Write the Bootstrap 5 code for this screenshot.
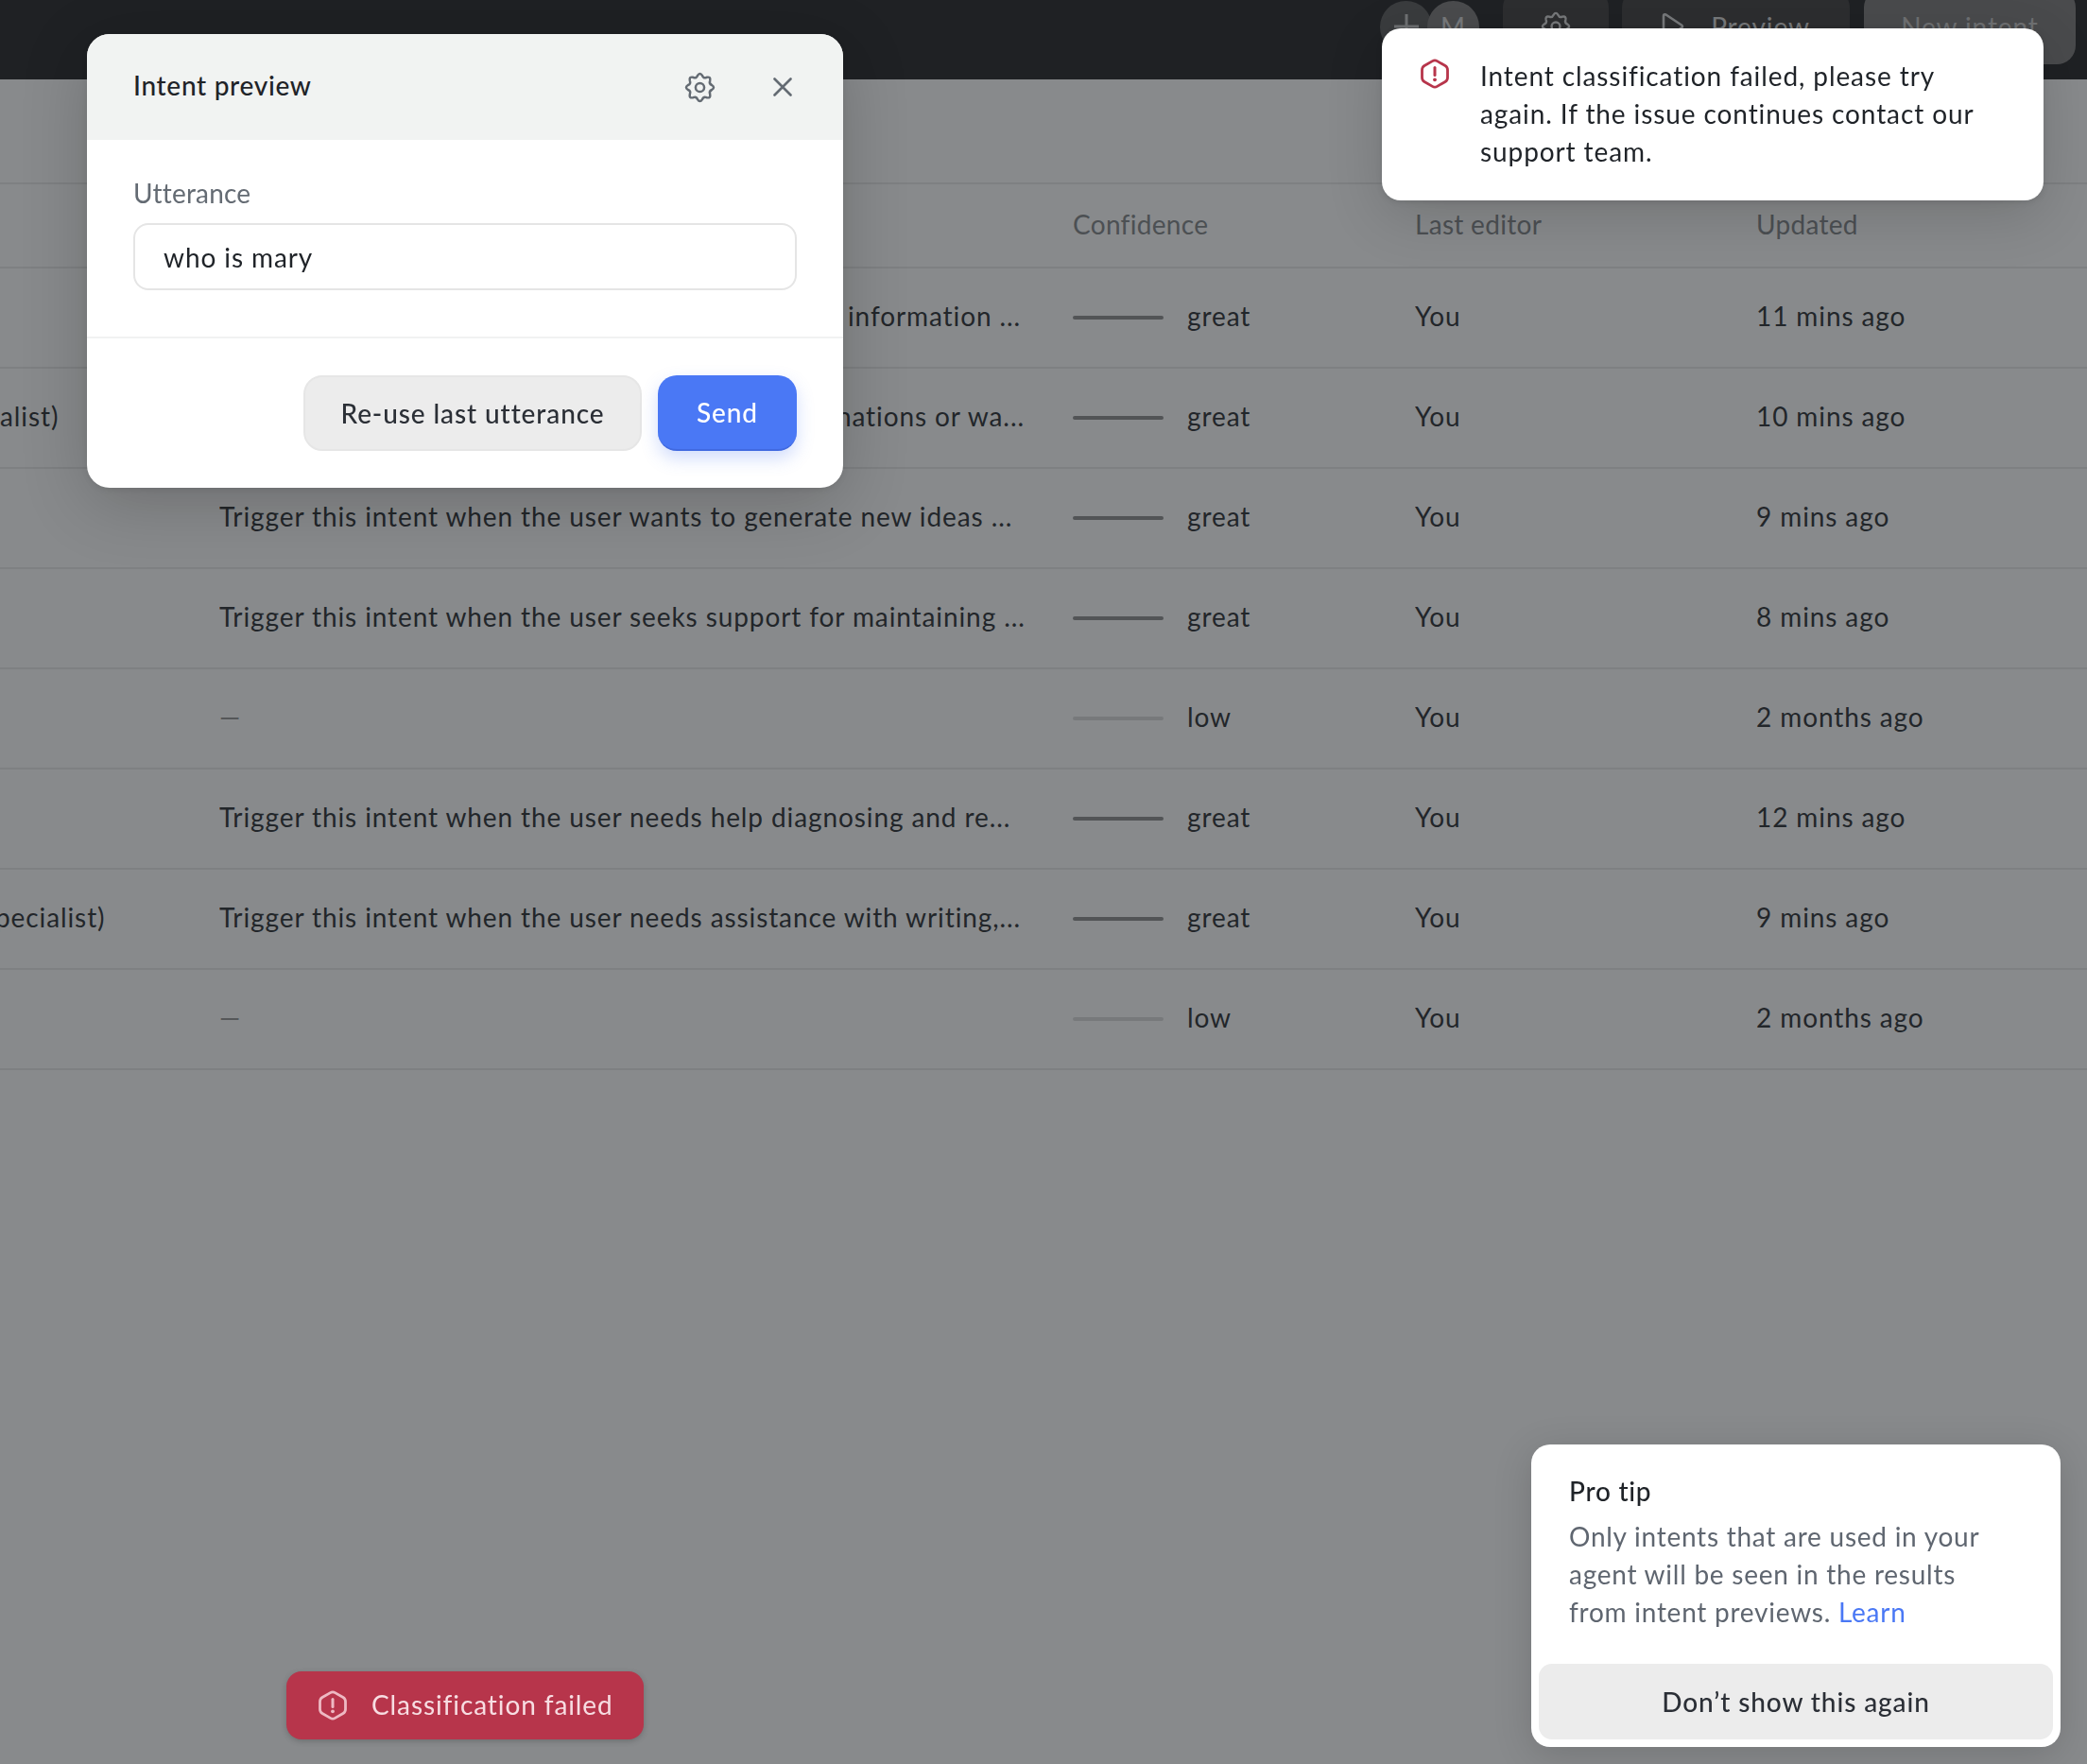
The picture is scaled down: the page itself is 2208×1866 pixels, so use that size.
<!DOCTYPE html>
<html lang="en">
<head>
  <meta charset="UTF-8" />
  <meta name="viewport" content="width=device-width, initial-scale=1.0"/>
  <title>Intents</title>
  <link href="https://cdn.jsdelivr.net/npm/bootstrap@5.3.0/dist/css/bootstrap.min.css" rel="stylesheet"/>
  <style>
    html, body { height: 100%; overflow: hidden; }
    body { font-family: Lato, "Noto Sans", sans-serif; font-size: 28px; line-height: 40px; color: #33363a; background: #fff; letter-spacing: .9px; }
    svg { display: block; flex-shrink: 0; }

    .topbar { height: 84px; background: #2d2d2f; padding: 0 12px 16px 0; align-items: flex-end; gap: 14px; }
    .bar-btn { height: 80px; flex-shrink: 0; border-radius: 20px; background: #494747; color: #ddd; gap: 28px; justify-content: center; align-items: center; }
    .bar-gear { width: 112px; }
    .bar-preview { width: 241px; }
    .bar-new { width: 224px; background: #838181; color: #cdcccc; margin-left: 1px; }
    .avatars { width: 105px; height: 80px; margin-right: 11px; flex-shrink: 0; }
    .avatar { width: 55px; height: 55px; border-radius: 50%; align-items: center; justify-content: center; margin-bottom: 0; }
    .avatar-plus { background: #636363; color: #ccc; }
    .avatar-m { background: #848282; color: #ddd; margin-left: -5px; }
    .subbar { height: 111px; border-bottom: 2px solid #ebebeb; }

    .intent-table { width: 2208px; table-layout: fixed; margin: 0; color: #33363a; }
    .intent-table th, .intent-table td { padding: 0 0 5px; vertical-align: middle; border-bottom: 2px solid #ebebeb; white-space: nowrap; overflow: hidden; background: transparent; color: inherit; }
    .intent-table th { height: 88px; font-weight: 400; color: #878a8d; letter-spacing: .3px; padding-bottom: 3px; }
    .intent-table td { height: 106px; }
    .cut-name { display: block; margin-left: -5px; }
    .dash { color: #999; }
    .conf { align-items: center; gap: 25px; }
    .conf-bar { width: 96px; height: 4px; border-radius: 2px; background: #939393; margin-top: 5px; }
    .conf-bar.is-low { background: #ddd; }

    .backdrop { position: fixed; inset: 0; background: rgba(17, 21, 25, .5); }

    .preview-dialog { position: fixed; left: 92px; top: 36px; width: 800px; height: 480px; background: #fff; border: 0; border-radius: 24px; overflow: hidden; box-shadow: 0 16px 70px rgba(0, 0, 0, .2), 0 2px 6px rgba(0, 0, 0, .08); }
    .preview-dialog .modal-header { height: 112px; background: #f1f3f2; border: 0; border-radius: 0; padding: 0 54px 0 49px; align-items: center; gap: 61px; }
    .dialog-title { font-size: 28px; line-height: 40px; font-weight: 500; color: #1f2328; margin: 0 auto 5px 0; letter-spacing: .7px; }
    .preview-dialog .modal-body { flex: none; height: 208px; padding: 36px 49px 0; }
    .preview-dialog .form-label { color: #646b73; margin: 0 0 12px; line-height: 40px; display: block; letter-spacing: .2px; }
    .preview-dialog .form-control { height: 71px; border: 2px solid #e5e5e5; border-radius: 16px; font-size: 28px; padding: 0 30px; color: #1f2328; letter-spacing: .9px; }
    .preview-dialog .modal-footer { border-top: 2px solid #f1f2f2; border-radius: 0; padding: 39px 49px 0; gap: 17px; justify-content: flex-end; align-items: flex-start; }
    .preview-dialog .modal-footer > * { margin: 0; }
    .act-btn { height: 80px; border-radius: 20px; font-size: 28px; font-weight: 500; letter-spacing: .9px; padding: 0 0 1px; }
    .act-reuse { width: 358px; background: #ececec; border: 2px solid #e6e6e6; color: #2b2f36; }
    .act-send { width: 147px; background: #4a78f5; border: 0; border-bottom: 2px solid #4069e0; color: #fff; box-shadow: 0 8px 18px rgba(74, 120, 245, .25); }

    .fail-notice { position: fixed; left: 1462px; top: 30px; width: 700px; height: 182px; background: #fff; border-radius: 20px; padding: 30px 60px 0 40px; gap: 32px; color: #1f2328; box-shadow: 0 16px 60px rgba(0, 0, 0, .16), 0 2px 6px rgba(0, 0, 0, .1); }
    .fail-notice svg { margin: 2px 0 0 0; }
    .fail-notice p { margin: 0; }

    .fail-pill { position: fixed; left: 303px; top: 1768px; width: 378px; height: 72px; background: #b7354b; border-radius: 16px; color: #f7dde2; padding: 0 0 2px 33px; gap: 25px; align-items: center; box-shadow: 0 2px 6px rgba(0, 0, 0, .2); }
    .fail-pill svg { margin-top: 2px; }

    .tip-card { position: fixed; left: 1620px; top: 1528px; width: 560px; height: 320px; background: #fff; border: 0; border-radius: 20px; padding: 29px 8px 8px; box-shadow: 0 8px 40px rgba(0, 0, 0, .15); }
    .tip-text { padding: 0 50px 0 32px; color: #5f6670; letter-spacing: .75px; }
    .tip-title { color: #1f2328; font-weight: 500; margin: 0 0 8px; }
    .tip-text a { color: #4a78f5; text-decoration: none; }
    .tip-btn { width: 544px; height: 80px; margin-top: auto; border: 0; border-radius: 14px; background: #ececec; color: #2b2f36; font-size: 28px; font-weight: 500; letter-spacing: .9px; padding: 0 0 1px; }
  </style>
</head>
<body>
  <svg width="0" height="0" class="position-absolute">
    <symbol id="cog" viewBox="-2 -2 36 36">
      <path fill="none" stroke="currentColor" stroke-width="2.7" d="M13.27 2.27Q16 -2 18.73 2.27Q20.21 5.84 23.78 4.36Q28.73 3.27 27.64 8.22Q26.16 11.79 29.73 13.27Q34 16 29.73 18.73Q26.16 20.21 27.64 23.78Q28.73 28.73 23.78 27.64Q20.21 26.16 18.73 29.73Q16 34 13.27 29.73Q11.79 26.16 8.22 27.64Q3.27 28.73 4.36 23.78Q5.84 20.21 2.27 18.73Q-2 16 2.27 13.27Q5.84 11.79 4.36 8.22Q3.27 3.27 8.22 4.36Q11.79 5.84 13.27 2.27Z"/>
      <circle cx="16" cy="16" r="5" fill="none" stroke="currentColor" stroke-width="2.7"/>
    </symbol>
    <symbol id="alert" viewBox="0 0 32 32">
      <path fill="none" stroke="currentColor" stroke-width="2.8" d="M13.5 2.6Q16 1.2 18.5 2.6L27 7.5Q29.5 9 29.5 12L29.5 20Q29.5 23 27 24.5L18.5 29.4Q16 30.8 13.5 29.4L5 24.5Q2.5 23 2.5 20L2.5 12Q2.5 9 5 7.5Z"/>
      <path fill="none" stroke="currentColor" stroke-width="3" stroke-linecap="round" d="M16 9.5V17.5"/>
      <circle cx="16" cy="22.3" r="1.9" fill="currentColor"/>
    </symbol>
  </svg>

  <header class="topbar d-flex justify-content-end">
    <div class="avatars d-flex align-items-center">
      <div class="avatar avatar-plus d-flex">
        <svg width="30" height="30" viewBox="0 0 30 30"><path fill="none" stroke="currentColor" stroke-width="3" d="M15 2V28M2 15H28"/></svg>
      </div>
      <div class="avatar avatar-m d-flex">M</div>
    </div>
    <div class="bar-btn bar-gear d-flex">
      <svg width="32" height="32"><use href="#cog"/></svg>
    </div>
    <div class="bar-btn bar-preview d-flex">
      <svg width="24" height="30" viewBox="0 0 24 30"><path fill="none" stroke="currentColor" stroke-width="2.6" stroke-linejoin="round" d="M2 4Q2 1.500 4.500 2.500L21 13.500Q23 15 21 16.500L4.500 27.500Q2 28.500 2 26Z"/></svg>
      <span>Preview</span>
    </div>
    <div class="bar-btn bar-new d-flex">New intent</div>
  </header>
  <div class="subbar"></div>

  <table class="table intent-table">
    <colgroup>
      <col style="width: 232px"/>
      <col style="width: 903px"/>
      <col style="width: 362px"/>
      <col style="width: 361px"/>
      <col/>
    </colgroup>
    <thead>
      <tr><th></th><th></th><th>Confidence</th><th>Last editor</th><th>Updated</th></tr>
    </thead>
    <tbody id="rows"></tbody>
  </table>

  <div class="backdrop"></div>

  <div class="modal-content preview-dialog">
    <div class="modal-header">
      <h5 class="dialog-title">Intent preview</h5>
      <svg width="33" height="33" style="color: #646b73"><use href="#cog"/></svg>
      <svg width="20" height="20" viewBox="0 0 20 20"><path fill="none" stroke="#646b73" stroke-width="2.600" stroke-linecap="round" d="M1.500 1.500L18.500 18.500M18.500 1.500L1.500 18.500"/></svg>
    </div>
    <div class="modal-body">
      <label class="form-label" for="utterance">Utterance</label>
      <input id="utterance" class="form-control" type="text" value="who is mary"/>
    </div>
    <div class="modal-footer">
      <button type="button" class="btn act-btn act-reuse">Re-use last utterance</button>
      <button type="button" class="btn act-btn act-send">Send</button>
    </div>
  </div>

  <div class="fail-notice d-flex">
    <svg width="32" height="32" style="color: #b7354b"><use href="#alert"/></svg>
    <p>Intent classification failed, please try again. If the issue continues contact our support team.</p>
  </div>

  <div class="fail-pill d-flex">
    <svg width="32" height="32" style="color: #eeb9c3"><use href="#alert"/></svg>
    <span>Classification failed</span>
  </div>

  <div class="card tip-card">
    <div class="tip-text">
      <p class="tip-title">Pro tip</p>
      Only intents that are used in your agent will be seen in the results from intent previews. <a href="#">Learn</a>
    </div>
    <button type="button" class="btn tip-btn">Don’t show this again</button>
  </div>

  <script>
    const rows = [
      ['', 'Trigger this intent when the user wants even more information ...', 'great', '11 mins ago'],
      ['alist)', 'Trigger this intent when the user asks to get explanations or wa...', 'great', '10 mins ago'],
      ['', 'Trigger this intent when the user wants to generate new ideas ...', 'great', '9 mins ago'],
      ['', 'Trigger this intent when the user seeks support for maintaining ...', 'great', '8 mins ago'],
      ['', '—', 'low', '2 months ago'],
      ['', 'Trigger this intent when the user needs help diagnosing and re...', 'great', '12 mins ago'],
      ['pecialist)', 'Trigger this intent when the user needs assistance with writing,...', 'great', '9 mins ago'],
      ['', '—', 'low', '2 months ago']
    ];
    document.getElementById('rows').innerHTML = rows.map(([name, desc, conf, updated]) => `
      <tr>
        <td>${name.startsWith('p') ? `<span class="cut-name">${name}</span>` : name}</td>
        <td>${desc === '—' ? `<span class="dash">${desc}</span>` : desc}</td>
        <td><div class="conf d-flex"><div class="conf-bar ${conf === 'low' ? 'is-low' : ''}"></div><span>${conf}</span></div></td>
        <td>You</td>
        <td>${updated}</td>
      </tr>`).join('');
  </script>
  <script src="https://cdn.jsdelivr.net/npm/bootstrap@5.3.0/dist/js/bootstrap.bundle.min.js"></script>
</body>
</html>
